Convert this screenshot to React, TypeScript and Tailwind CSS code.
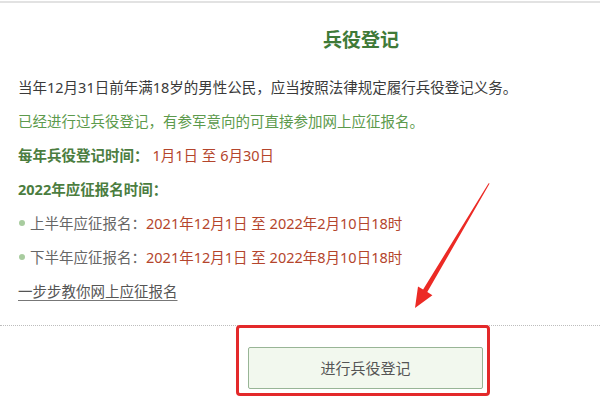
export default function App() {
  return (
    <main
      className="relative w-[600px] h-[401px] overflow-hidden bg-white"
      style={{ fontFamily: '"Noto Sans", "Noto Sans CJK SC", sans-serif' }}
    >
      <div className="mt-[1px] h-[2px] bg-[#e2e2e2]" />

      {/* title */}
      <h1
        className="mt-[25px] pl-[323px] text-[19px] leading-[22px] font-bold text-[#3f7a38]"
        style={{ fontFamily: '"Noto Sans CJK SC", sans-serif' }}
      >
        兵役登记
      </h1>

      <div className="mt-[20px] px-[18px] text-[14.5px] leading-[34px]">
        <p className="text-[#3a3a3a]">
          当年12月31日前年满18岁的男性公民，应当按照法律规定履行兵役登记义务。
        </p>
        <p className="text-[#5c9a4c]">已经进行过兵役登记，有参军意向的可直接参加网上应征报名。</p>
        <p>
          <span className="font-bold text-[#4b7d3f]">每年兵役登记时间：</span>
          <span className="ml-[4px] text-[#b4452c]">1月1日 至 6月30日</span>
        </p>
        <p className="font-bold text-[#4b7d3f]">2022年应征报名时间：</p>
        <p className="flex items-center">
          <span className="mr-[5px] ml-[1px] h-[6px] w-[6px] rounded-full bg-[#a8cc9f]" />
          <span className="text-[#666]">上半年应征报名：</span>
          <span className="text-[#b4452c]">2021年12月1日 至 2022年2月10日18时</span>
        </p>
        <p className="flex items-center">
          <span className="mr-[5px] ml-[1px] h-[6px] w-[6px] rounded-full bg-[#a8cc9f]" />
          <span className="text-[#666]">下半年应征报名：</span>
          <span className="text-[#b4452c]">2021年12月1日 至 2022年8月10日18时</span>
        </p>
        <p>
          <a className="text-[#555] underline underline-offset-[3px] decoration-[#777]">一步步教你网上应征报名</a>
        </p>
      </div>

      <div className="mt-[17px] border-t border-dotted border-[#bdbdbd]" />

      <div className="mt-[21px] pl-[248px]">
        <button
          className="h-[42px] w-[235px] rounded-[2px] border border-[#98b596] bg-[#f2f8ee] text-[15px] text-[#555]"
          style={{ fontFamily: '"Noto Sans CJK SC", sans-serif' }}
        >
          进行兵役登记
        </button>
      </div>

      {/* annotation overlay */}
      <div className="absolute left-[236px] top-[325px] h-[71px] w-[254px] rounded-[4px] border-[3px] border-[#e3292a]" />
      <svg className="absolute left-0 top-0" width="600" height="401" viewBox="0 0 600 401">
        <polygon
          points="489.6,183.6 427.3,292.1 432.4,295.2 415,308 418,286.6 423.1,289.5 488.6,183.2"
          fill="#ec2a25"
        />
      </svg>
    </main>
  );
}
